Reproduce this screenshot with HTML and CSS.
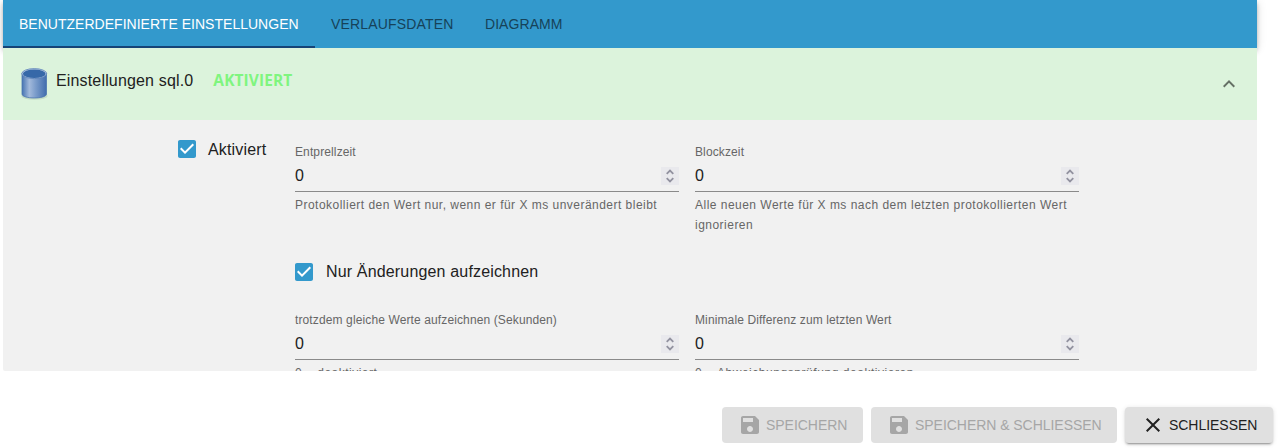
FILE: index.html
```html
<!DOCTYPE html>
<html lang="de">
<head>
<meta charset="utf-8">
<title>Einstellungen</title>
<link rel="stylesheet" href="styles.css">
</head>
<body>
<svg class="defs" aria-hidden="true">
  <symbol id="check" viewBox="0 0 24 24"><path d="M19 3H5c-1.11 0-2 .9-2 2v14c0 1.1.89 2 2 2h14c1.11 0 2-.9 2-2V5c0-1.1-.89-2-2-2zm-9 14l-5-5 1.41-1.41L10 14.17l7.59-7.59L19 8l-9 9z"/></symbol>
  <symbol id="save" viewBox="0 0 24 24"><path d="M17 3H5c-1.11 0-2 .9-2 2v14c0 1.1.89 2 2 2h14c1.1 0 2-.9 2-2V7l-4-4zm-5 16c-1.66 0-3-1.34-3-3s1.34-3 3-3 3 1.34 3 3-1.34 3-3 3zm3-10H5V5h10v4z"/></symbol>
  <symbol id="spin" viewBox="0 0 18 18"><path d="M5.7 6.8 9 3.6l3.3 3.2M5.7 11.2 9 14.4l3.3-3.2"/></symbol>
</svg>
<main class="dialog">
  <section class="paper">
    <nav class="tabs">
      <a class="tab active">BENUTZERDEFINIERTE EINSTELLUNGEN</a>
      <a class="tab history">VERLAUFSDATEN</a>
      <a class="tab">DIAGRAMM</a>
    </nav>
    <div class="panel">
      <header class="summary">
        <svg class="database" viewBox="0 0 28 34">
          <defs>
            <linearGradient id="side"><stop offset="0" stop-color="#4774b2"/><stop offset=".3" stop-color="#a2b9db"/><stop offset=".55" stop-color="#7c9dcb"/><stop offset="1" stop-color="#416dad"/></linearGradient>
          </defs>
          <ellipse class="db-shadow" cx="14.5" cy="29" rx="13" ry="3.800"/>
          <path class="db-side" d="M2 6v21c0 5.300 24.500 5.300 24.500 0V6z"/>
          <ellipse class="db-rim" cx="14.250" cy="6.600" rx="12.400" ry="5"/>
          <ellipse class="db-top" cx="14.250" cy="6.700" rx="11.400" ry="4.300"/>
        </svg>
        <span class="title">Einstellungen sql.0</span>
        <span class="status">AKTIVIERT</span>
        <svg class="chevron" viewBox="0 0 24 24"><path d="M12 8l-6 6 1.410 1.410L12 10.830l4.590 4.580L18 14z"/></svg>
      </header>
      <div class="details">
        <label class="option enabled"><svg class="box"><use href="#check"/></svg><span>Aktiviert</span></label>
        <div class="fields">
          <div class="field">
            <div class="label">Entprellzeit</div>
            <div class="input"><span>0</span><svg class="spin"><use href="#spin"/></svg></div>
            <div class="help">Protokolliert den Wert nur, wenn er für X ms unverändert bleibt</div>
          </div>
          <div class="field">
            <div class="label">Blockzeit</div>
            <div class="input"><span>0</span><svg class="spin"><use href="#spin"/></svg></div>
            <div class="help">Alle neuen Werte für X ms nach dem letzten protokollierten Wert ignorieren</div>
          </div>
          <label class="option changes"><svg class="box"><use href="#check"/></svg><span>Nur Änderungen aufzeichnen</span></label>
          <div class="field">
            <div class="label">trotzdem gleiche Werte aufzeichnen (Sekunden)</div>
            <div class="input"><span>0</span><svg class="spin"><use href="#spin"/></svg></div>
            <div class="help">0 = deaktiviert</div>
          </div>
          <div class="field">
            <div class="label">Minimale Differenz zum letzten Wert</div>
            <div class="input"><span>0</span><svg class="spin"><use href="#spin"/></svg></div>
            <div class="help wide">0 = Abweichungsprüfung deaktivieren</div>
          </div>
        </div>
      </div>
    </div>
  </section>
  <footer class="actions">
    <button class="btn save" disabled><svg class="icon"><use href="#save"/></svg>SPEICHERN</button>
    <button class="btn save-close" disabled><svg class="icon"><use href="#save"/></svg>SPEICHERN &amp; SCHLIESSEN</button>
    <button class="btn close"><svg class="icon" viewBox="0 0 24 24"><path d="M19 6.410L17.590 5 12 10.590 6.410 5 5 6.410 10.590 12 5 17.590 6.410 19 12 13.410 17.590 19 19 17.590 13.410 12z"/></svg>SCHLIESSEN</button>
  </footer>
</main>
</body>
</html>
```
FILE: styles.css
```css
* { box-sizing: border-box; }
body {
  margin: 0;
  background: #fff;
  color: #212121;
  font-family: "Liberation Sans", Arial, sans-serif;
  font-size: 16px;
  overflow: hidden;
}
.defs { display: none; }
.dialog { display: flex; flex-direction: column; height: 448px; }
.paper { width: 1254px; height: 371px; margin-left: 3px; flex: none; }
.tabs {
  display: flex;
  height: 48px;
  background: #3399cc;
  box-shadow: 0 2px 4px -1px rgba(0,0,0,.2), 0 4px 5px rgba(0,0,0,.14), 0 1px 10px rgba(0,0,0,.12);
}
.tab {
  padding: 0 16px;
  font-size: 14px;
  line-height: 48px;
  letter-spacing: .06px;
  white-space: nowrap;
  color: #164259;
}
.tab.active { width: 312px; letter-spacing: .02px; color: #fff; border-bottom: 2px solid #164477; }
.history { width: 154px; letter-spacing: .17px; }
.panel {
  position: relative;
  height: 323px;
  overflow: hidden;
  background: #f1f1f1;
  border-radius: 0 0 2px 2px;
}
.summary {
  display: flex;
  align-items: center;
  height: 72px;
  padding: 0 16px;
  background: #dcf3dc;
}
.database { width: 28px; height: 34px; margin: 0 8px 0 1px; flex: none; }
.db-shadow { fill: #5d785d; opacity: .18; }
.db-side { fill: url(#side); stroke: #4c76b0; stroke-width: .8; }
.db-rim { fill: #c3d3e8; stroke: #4c76b0; stroke-width: .7; }
.db-top { fill: #3668a8; }
.title { margin-top: -7px; letter-spacing: .16px; }
.status {
  margin: -9px 0 0 20px;
  color: #7ff57f;
  font: bold 15.5px "Open Sans", "Noto Sans", sans-serif;
  letter-spacing: .1px;
}
.chevron { width: 24px; height: 24px; margin-left: auto; fill: #657065; }
.details { display: flex; padding: 20px 0 0 172px; }
.option { display: flex; align-items: center; gap: 9px; height: 24px; letter-spacing: .16px; }
.enabled { width: 120px; margin-top: -3px; }
.enabled span { padding-top: 2px; }
.box { width: 24px; height: 24px; fill: #3399cc; background: linear-gradient(#fff, #fff) center / 16px 16px no-repeat; }
.fields { display: grid; grid-template-columns: 384px 384px; column-gap: 16px; }
.field { padding-top: 4px; }
.label { font-size: 12px; line-height: 16px; letter-spacing: .12px; color: #666; white-space: nowrap; }
.input {
  display: flex;
  align-items: center;
  justify-content: space-between;
  height: 32px;
  border-bottom: 1px solid #8a8a8a;
}
.spin { width: 18px; height: 18px; background: #e9e9ed; fill: none; stroke: #9292a0; stroke-width: 1.8; }
.help { padding-top: 3px; color: #666; font-size: 12px; line-height: 20px; letter-spacing: .48px; }
.help.wide { letter-spacing: .55px; }
.changes { grid-column: 1 / -1; gap: 10px; margin: 25px 0 24px -3px; }
.actions { display: flex; justify-content: flex-end; gap: 8px; padding: 36px 8px 0 0; }
.btn {
  display: flex;
  align-items: center;
  height: 36px;
  padding: 0 16px;
  border: 0;
  border-radius: 4px;
  background: #e0e0e0;
  color: #a6a6a6;
  font: 14px "Liberation Sans", Arial, sans-serif;
  letter-spacing: -.04px;
  white-space: nowrap;
}
.save { width: 141px; }
.save-close { width: 246px; }
.close {
  width: 148px;
  color: #212121;
  box-shadow: 0 3px 1px -2px rgba(0,0,0,.2), 0 2px 2px rgba(0,0,0,.14), 0 1px 5px rgba(0,0,0,.12);
}
.icon { width: 24px; height: 24px; margin-right: 4px; flex: none; fill: currentColor; }
```
